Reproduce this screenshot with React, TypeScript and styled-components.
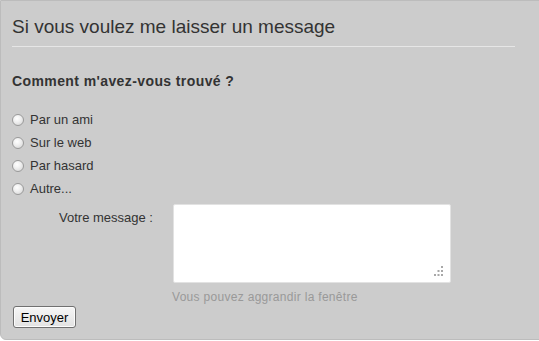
import React from "react";
import styled, { createGlobalStyle } from "styled-components";

const Global = createGlobalStyle`
  html, body { margin: 0; padding: 0; background: #ffffff; overflow: hidden; }
  body { font-family: "Liberation Sans", Arial, sans-serif; }
`;

const Panel = styled.div`
  box-sizing: border-box;
  width: 560px;
  height: 340px;
  background: #cccccc;
  border: 1px solid #bcbcbc;
  border-radius: 0 0 0 6px;
  padding: 14px 0 0 11px;
  color: #333333;
`;

const Title = styled.h1`
  margin: 0;
  padding: 0 0 8px 0;
  font-size: 19px;
  font-weight: normal;
  line-height: 23px;
  color: #333333;
  border-bottom: 1px solid #e6e6e6;
  width: 503px;
`;

const Question = styled.h2`
  margin: 26px 0 0 0;
  font-size: 14px;
  letter-spacing: 0.4px;
  font-weight: bold;
  line-height: 16px;
  color: #333333;
`;

const Options = styled.div`
  display: flex;
  flex-direction: column;
  gap: 7px;
  margin-top: 23px;
`;

const Option = styled.label`
  display: flex;
  align-items: center;
  gap: 6px;
  font-size: 13px;
  line-height: 16px;
  color: #333333;
`;

const Radio = styled.input`
  appearance: none;
  margin: 0;
  width: 12px;
  height: 12px;
  border-radius: 50%;
  border: 1px solid #9a9a9a;
  background: radial-gradient(circle at 40% 35%, #ffffff 0%, #f0f0f0 40%, #d0d0d0 100%);
  box-sizing: border-box;
`;

const MessageRow = styled.div`
  display: grid;
  grid-template-columns: 141px 278px;
  column-gap: 20px;
  row-gap: 7px;
  margin-top: 7px;
`;

const MessageLabel = styled.label`
  text-align: right;
  font-size: 13px;
  line-height: 16px;
  padding-top: 6px;
  color: #333333;
`;

const FieldWrap = styled.div`
  position: relative;
  width: 278px;
  height: 79px;
`;

const TextArea = styled.textarea`
  display: block;
  box-sizing: border-box;
  width: 278px;
  height: 79px;
  border: 1px solid #e2e2e2;
  border-radius: 2px;
  background: #ffffff;
  resize: none;
  margin: 0;
  font-family: "Liberation Sans", Arial, sans-serif;
`;

const Grip = styled.svg`
  position: absolute;
  right: 7px;
  bottom: 7px;
  width: 10px;
  height: 10px;
  pointer-events: none;
`;

const Hint = styled.div`
  grid-column: 2;
  font-size: 12px;
  letter-spacing: 0.3px;
  line-height: 15px;
  color: #999999;
  margin-left: -1px;
`;

const SubmitButton = styled.button`
  margin-top: 1px;
  margin-left: 1px;
  box-sizing: border-box;
  width: 63px;
  height: 22px;
  padding: 0;
  font-family: "Liberation Sans", Arial, sans-serif;
  font-size: 13px;
  color: #000000;
  background: linear-gradient(#f6f6f6, #e2e2e2);
  border: 1px solid #707070;
  border-radius: 3px;
  box-shadow: inset 0 0 0 1px #fcfcfc;
`;

const options = ["Par un ami", "Sur le web", "Par hasard", "Autre..."];

const dots: [number, number][] = [
  [7, 0],
  [3.5, 4],
  [7, 4],
  [0, 8],
  [3.5, 8],
  [7, 8],
];

export default function App() {
  return (
    <>
      <Global />
      <Panel>
        <Title>Si vous voulez me laisser un message</Title>
        <Question>Comment m'avez-vous trouvé ?</Question>
        <Options>
          {options.map((o) => (
            <Option key={o}>
              <Radio type="radio" name="source" />
              {o}
            </Option>
          ))}
        </Options>
        <MessageRow>
          <MessageLabel htmlFor="msg">Votre message :</MessageLabel>
          <FieldWrap>
            <TextArea id="msg" />
            <Grip viewBox="0 0 10 10">
              {dots.map(([x, y], i) => (
                <rect key={i} x={x} y={y} width="2" height="2" fill="#a8a8a8" />
              ))}
            </Grip>
          </FieldWrap>
          <Hint>Vous pouvez aggrandir la fenêtre</Hint>
        </MessageRow>
        <SubmitButton>Envoyer</SubmitButton>
      </Panel>
    </>
  );
}
